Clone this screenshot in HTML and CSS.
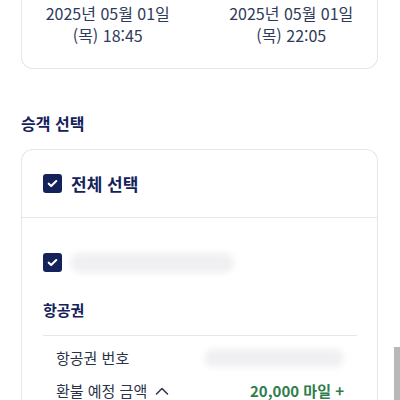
FILE: index.html
```html
<!DOCTYPE html>
<html lang="ko">
<head>
<meta charset="utf-8">
<meta name="viewport" content="width=device-width,initial-scale=1">
<title>승객 선택</title>
<link rel="stylesheet" href="styles.css">
</head>
<body>
<div class="page">
  <!-- 여정 시간 -->
  <div class="card sched">
    <div class="col">
      <div>2025년 05월 01일</div>
      <div>(목) 18:45</div>
    </div>
    <div class="col">
      <div>2025년 05월 01일</div>
      <div>(목) 22:05</div>
    </div>
  </div>

  <h2 class="sec">승객 선택</h2>

  <div class="card pax">
    <label class="all">
      <span class="chk"><svg viewBox="0 0 18 18"><path d="M5 9.2l2.6 2.5L13 6.4" fill="none" stroke="#fff" stroke-width="2.2" stroke-linecap="round" stroke-linejoin="round"/></svg></span>
      전체 선택
    </label>
    <div class="body">
      <div class="person">
        <span class="chk"><svg viewBox="0 0 18 18"><path d="M5 9.2l2.6 2.5L13 6.4" fill="none" stroke="#fff" stroke-width="2.2" stroke-linecap="round" stroke-linejoin="round"/></svg></span>
        <span class="blur name"></span>
      </div>
      <h3 class="sub">항공권</h3>
      <div class="rows">
        <div class="row"><span>항공권 번호</span><span class="blur num"></span></div>
        <div class="row">
          <span class="lbl">환불 예정 금액 <svg class="caret" viewBox="0 0 14 14"><path d="M1.5 10l5.5-5.5 5.5 5.5" fill="none" stroke="#2b3348" stroke-width="1.5" stroke-linecap="round" stroke-linejoin="round"/></svg></span>
          <span class="amt">20,000 마일 +</span>
        </div>
      </div>
    </div>
  </div>
</div>
<div class="scroll"></div>
</body>
</html>
```

FILE: styles.css
```css
:root{--navy:#14215a;--txt:#2b3553;--line:#e4e6ea;--green:#2f7d4c}
*{box-sizing:border-box}
body{margin:0;background:#fff;color:var(--txt);font-family:"Noto Sans CJK KR","Noto Sans",sans-serif;overflow:hidden}
.page{padding:0 22px 0 21px;margin-top:-30px}
.card{border:1px solid var(--line);border-radius:12px;background:#fff}
.sched{display:flex;padding:32px 0 22px;border-top:0;border-radius:0 0 12px 12px}
.sched .col{flex:1;text-align:center;font-size:16px;line-height:22px;color:#2f3a5c}
.sched .col:first-child{padding-right:6px}
.sched .col:last-child{padding-left:6px}
.sec{font-size:16px;font-weight:700;color:var(--navy);margin:42px 0 14px;line-height:24px}
.pax{border-bottom:0;border-radius:12px 12px 0 0}
.all{display:flex;align-items:center;gap:9px;height:68px;padding-left:21px;font-size:17px;font-weight:700;color:var(--navy);border-bottom:1px solid var(--line)}
.chk{width:19px;height:19px;border-radius:3px;background:var(--navy);display:inline-flex;align-items:center;justify-content:center}
.chk svg{width:17px;height:17px}
.body{padding:0 20px 0 21px}
.person{display:flex;align-items:center;gap:8px;margin-top:35px;height:19px}
.blur{display:inline-block;background:#f0f0f3;border-radius:10px;filter:blur(3px)}
.name{width:164px;height:20px}
.sub{font-size:15px;font-weight:700;color:var(--navy);margin:27px 0 0;line-height:22px;padding-bottom:14px;border-bottom:1px solid var(--line)}
.rows{padding:5px 13px 0 13px}
.row{display:flex;justify-content:space-between;align-items:center;font-size:15px;line-height:33px;color:#2b3348}
.lbl{display:inline-flex;align-items:center;gap:8px}
.num{width:140px;height:18px}
.caret{width:14px;height:14px}
.amt{color:var(--green);font-weight:700}
.scroll{position:fixed;right:0;top:347px;width:6px;height:60px;background:#b8b8b8}
```
